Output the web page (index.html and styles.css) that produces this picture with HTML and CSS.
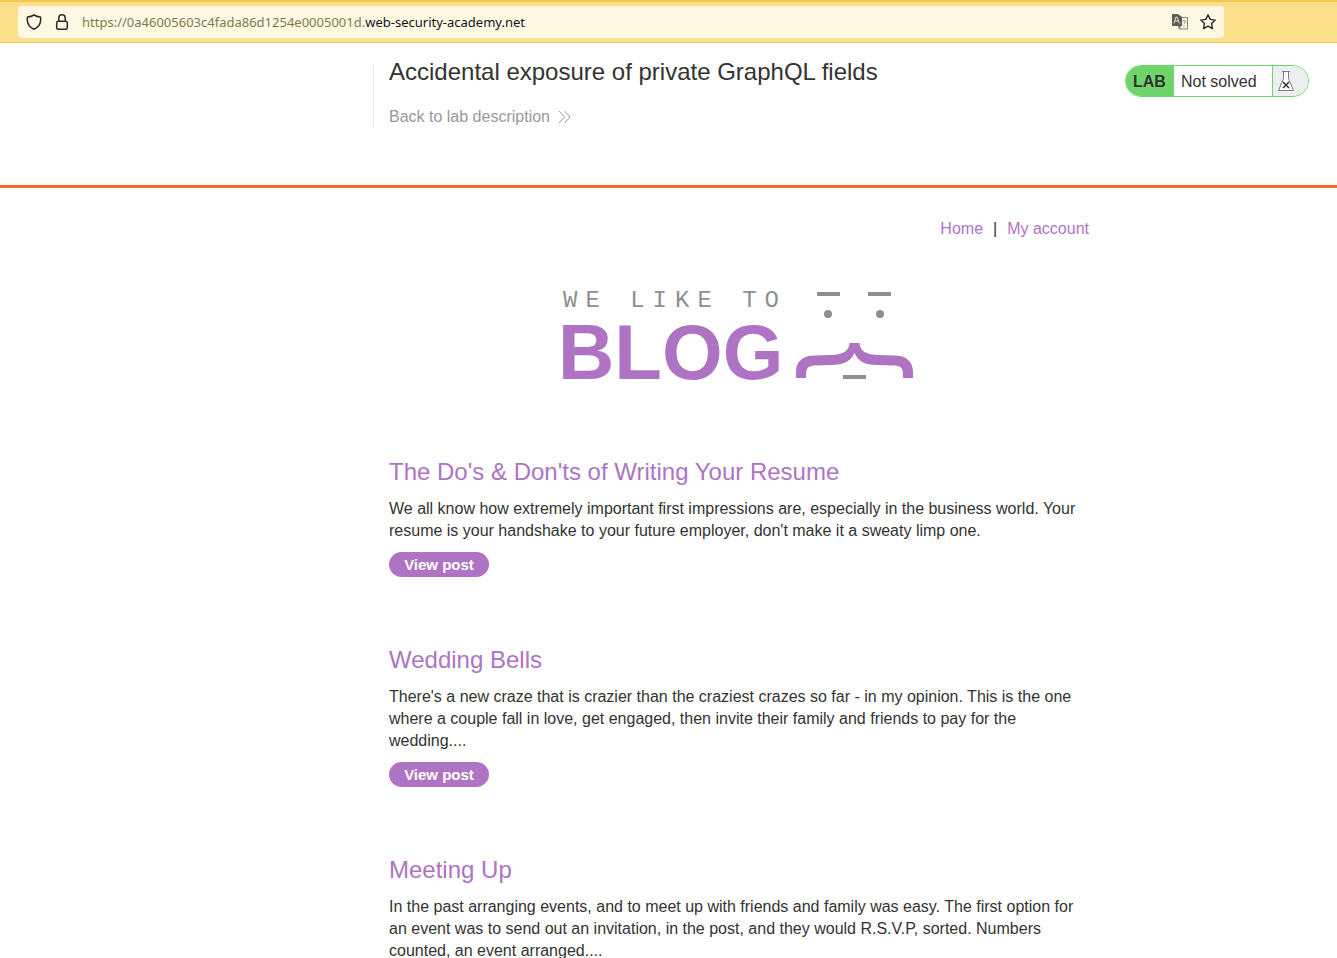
FILE: index.html
```html
<!DOCTYPE html>
<html lang="en">
<head>
    <meta charset="UTF-8">
    <meta name="viewport" content="width=device-width, initial-scale=1.0">
    <title>Accidental exposure of private GraphQL fields</title>
    <link rel="stylesheet" href="styles.css">
</head>
<body>
    <!-- Address bar -->
    <div class="toolbar">
        <div class="urlbar">
            <svg class="icon" width="16" height="16" viewBox="0 0 16 16" fill="none" stroke="#2b2a33" stroke-width="1.5" stroke-linejoin="round">
                <path d="M8 .9 C6.300 2.300 3.800 2.900 1.500 2.900 C.6 8.500 3 13 8 15.200 C13 13 15.400 8.500 14.500 2.900 C12.200 2.900 9.700 2.300 8 .9Z"/>
            </svg>
            <svg class="icon" width="16" height="16" viewBox="0 0 16 16" fill="none" stroke="#2b2a33" stroke-width="1.500">
                <rect x="2.700" y="7.300" width="10.600" height="8" rx="1.500"/>
                <path d="M4.800 7.300V4a3.200 3.200 0 0 1 6.400 0v3.300"/>
            </svg>
            <div class="url"><span>https://0a46005603c4fada86d1254e0005001d.</span>web-security-academy.net</div>
            <svg class="icon" width="16" height="16" viewBox="0 0 16 16">
                <path d="M7 3.500h8.500v11.500H7z" fill="#fff8e3" stroke="#8a857a"/>
                <path d="M0 0h6l4 3v9H8.500v2.500L6 12H0z" fill="#605d58"/>
                <path d="M2 9.500 4 3h1l2.500 6.500M3 7h3.500" fill="none" stroke="#e8e2d0"/>
                <path d="M10.500 7.500c.5-1.500 3-1.200 3 .2 0 1.300-1.600 1.200-1.600 2.500M11.900 11.500v1.200" fill="none" stroke="#8a857a"/>
            </svg>
            <svg class="icon" width="16" height="16" viewBox="0 0 16 16" fill="none" stroke="#2b2a33" stroke-width="1.400" stroke-linejoin="round">
                <path d="M8 .9l2.200 4.500 5 .7-3.600 3.500.9 5L8 12.200l-4.500 2.400.9-5L.8 6.100l5-.7z"/>
            </svg>
        </div>
    </div>

    <!-- Lab header -->
    <header class="lab-header">
        <div class="title-container">
            <h2>Accidental exposure of private GraphQL fields</h2>
            <a class="link-back" href="#">Back to lab description
                <svg width="13" height="14" viewBox="0 0 13 14" fill="none" stroke="#999" stroke-width="1">
                    <path d="M1 1l5.500 6L1 13M6.500 1l5.500 6-5.500 6"/>
                </svg>
            </a>
        </div>
        <div class="lab-status">
            <span class="lab-label">LAB</span>
            <p>Not solved</p>
            <span class="lab-icon">
                <svg width="18" height="22" viewBox="0 0 18 22" fill="#fff" stroke="#7d7d7d" stroke-width="1">
                    <path d="M6.500 1.500v7L1.500 20.500h15L11.500 8.500v-7z"/>
                    <path d="M5 1.500h8"/>
                    <path d="M6 12l6 6M12 12l-6 6" stroke="#333" stroke-width="1.500"/>
                </svg>
            </span>
        </div>
    </header>

    <main class="container">
        <nav class="top-links">
            <a href="#">Home</a><span>|</span><a href="#">My account</a>
        </nav>

        <svg class="logo" width="352" height="96" viewBox="0 0 352 96">
            <text class="logo-small" x="0" y="19">WE LIKE TO</text>
            <text class="logo-big" x="-5" y="91">BLOG</text>
            <g fill="#8f8f8f">
                <rect x="254" y="4" width="23" height="4"/>
                <rect x="305" y="4" width="23" height="4"/>
                <circle cx="265" cy="26" r="4"/>
                <circle cx="317" cy="26" r="4"/>
                <rect x="280" y="87" width="23" height="4"/>
            </g>
            <path fill="#ae74c3" d="M233 90V84C233 73 240 67.500 252 67.500L267 67C280 67 286 63 286.500 55H296.500C297 63 303 67 316 67L331 67.500C343 67.500 350 73 350 84V90H340V86C340 79.500 337 77.500 330 77.500L314 77C301 77 295 73 291.500 65C288 73 281 77 268 77L253 77.500C246 77.500 243 79.500 243 86V90Z"/>
        </svg>

        <article class="blog-post">
            <h2><a href="#">The Do's &amp; Don'ts of Writing Your Resume</a></h2>
            <p>We all know how extremely important first impressions are, especially in the business world. Your resume is your handshake to your future employer, don't make it a sweaty limp one.</p>
            <a class="button" href="#">View post</a>
        </article>

        <article class="blog-post">
            <h2><a href="#">Wedding Bells</a></h2>
            <p>There's a new craze that is crazier than the craziest crazes so far - in my opinion. This is the one where a couple fall in love, get engaged, then invite their family and friends to pay for the wedding....</p>
            <a class="button" href="#">View post</a>
        </article>

        <article class="blog-post">
            <h2><a href="#">Meeting Up</a></h2>
            <p>In the past arranging events, and to meet up with friends and family was easy. The first option for an event was to send out an invitation, in the post, and they would R.S.V.P, sorted. Numbers counted, an event arranged....</p>
        </article>
    </main>
</body>
</html>
```
FILE: styles.css
```css
* {
    box-sizing: border-box;
    margin: 0;
    padding: 0;
}

html {
    scrollbar-width: none;
}

body {
    font-family: "Liberation Sans", Arial, sans-serif;
    font-size: 16px;
    line-height: 22px;
    color: #333332;
    background: #fff;
}

a {
    color: #ae74c3;
    text-decoration: none;
}

/* Address bar */
.toolbar {
    height: 43px;
    padding: 4px 113px 4px 18px;
    background: #fbdf8b;
    border-top: 2px solid #f2c74e;
    border-bottom: 1px solid #f2c74e;
}

.urlbar {
    display: flex;
    align-items: center;
    gap: 12px;
    height: 32px;
    padding: 0 8px;
    background: #fff8e3;
    border-radius: 4px;
}

.icon {
    flex: none;
}

.url {
    flex: 1;
    font-family: "Noto Sans", sans-serif;
    font-size: 13px;
    line-height: 24px;
    color: #15141a;
    white-space: nowrap;
}

.url span {
    color: #83784f;
}

/* Lab header */
.lab-header {
    display: flex;
    justify-content: space-between;
    align-items: flex-start;
    height: 145px;
    padding: 22px 28px 0 373px;
    border-bottom: 3px solid #ff6633;
}

.title-container {
    height: 62px;
    padding-left: 15px;
    border-left: 1px solid #e4e4e4;
}

.title-container h2 {
    margin-bottom: 27px;
    font-size: 24px;
    font-weight: normal;
    line-height: 14px;
}

.link-back {
    display: flex;
    align-items: center;
    gap: 8px;
    color: #999;
}

.lab-status {
    display: flex;
    height: 32px;
    border: 1px solid #70d46c;
    border-radius: 16px;
    overflow: hidden;
    line-height: 32px;
}

.lab-label {
    width: 48px;
    padding-left: 7px;
    font-weight: bold;
    background: #70d46c;
}

.lab-status p {
    width: 98px;
    padding-left: 7px;
}

.lab-icon {
    display: flex;
    align-items: center;
    width: 36px;
    padding-left: 4px;
    border-left: 1px solid #70d46c;
    background: #ebeff2;
}

/* Blog */
.container {
    max-width: 700px;
    margin-left: 389px;
    padding-top: 30px;
}

.top-links {
    display: flex;
    justify-content: flex-end;
    gap: 10px;
}

.logo {
    display: block;
    margin: 48px auto 74px;
    overflow: visible;
}

.logo-small {
    font-family: "Liberation Mono", monospace;
    font-size: 24px;
    letter-spacing: 8px;
    fill: #8f8f8f;
}

.logo-big {
    font-size: 78px;
    font-weight: bold;
    fill: #ae74c3;
}

.blog-post {
    margin-bottom: 69px;
}

.blog-post:last-child {
    margin-bottom: 0;
}

.blog-post h2 {
    margin-bottom: 12px;
    font-size: 24px;
    font-weight: normal;
    line-height: 28px;
}

.blog-post p {
    margin-bottom: 10px;
}

.button {
    display: block;
    width: 100px;
    height: 25px;
    border-radius: 13px;
    background: #ae74c3;
    color: #fff;
    font-size: 15px;
    font-weight: bold;
    line-height: 25px;
    text-align: center;
}
```
